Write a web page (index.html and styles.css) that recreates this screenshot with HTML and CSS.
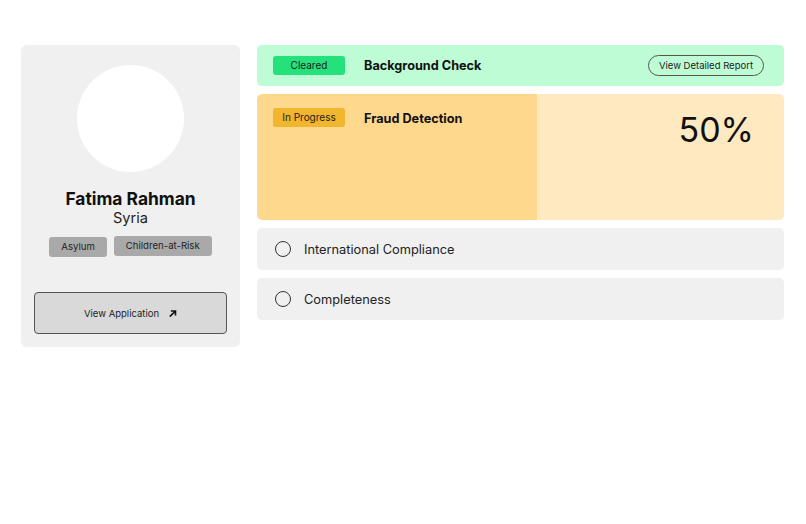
FILE: index.html
```html
<!DOCTYPE html>
<html>
<head>
<meta charset="utf-8">
<link rel="stylesheet" href="styles.css">
</head>
<body>
<div class="page">
  <aside class="profile">
    <div class="avatar"></div>
    <div class="name">Fatima Rahman</div>
    <div class="country">Syria</div>
    <div class="tags">
      <span class="tag">Asylum</span>
      <span class="tag">Children-at-Risk</span>
    </div>
    <button class="view-app">View Application
      <svg class="arrow" width="9" height="9" viewBox="0 0 10 10"><path d="M2 8.5 L8 2.5 M3.2 2.2 H8.3 V7.3" fill="none" stroke="#111" stroke-width="1.8"/></svg>
    </button>
  </aside>
  <main class="checks">
    <section class="row cleared">
      <span class="badge badge-green">Cleared</span>
      <span class="title">Background Check</span>
      <button class="report">View Detailed Report</button>
    </section>
    <section class="fraud">
      <div class="fraud-main">
        <span class="badge badge-amber">In Progress</span>
        <span class="title">Fraud Detection</span>
      </div>
      <div class="fraud-side">
        <span class="pct">50%</span>
      </div>
    </section>
    <section class="row pending">
      <span class="radio"></span>
      <span class="label">International Compliance</span>
    </section>
    <section class="row pending">
      <span class="radio"></span>
      <span class="label">Completeness</span>
    </section>
  </main>
</div>
</body>
</html>
```
FILE: styles.css
```css
* { box-sizing: border-box; }
body {
  margin: 0;
  font-family: Inter, "Noto Sans", sans-serif;
  color: #111;
  background: #fff;
}
.page {
  display: flex;
  align-items: flex-start;
  gap: 17px;
  padding: 45px 0 0 21px;
}
.profile {
  width: 219px;
  height: 302px;
  background: #f0f0f0;
  border-radius: 6px;
  padding: 20px 13px 0;
  display: flex;
  flex-direction: column;
  align-items: center;
}
.avatar {
  width: 107px;
  height: 107px;
  border-radius: 50%;
  background: #fff;
}
.name {
  margin-top: 16px;
  font-size: 17.4px;
  font-weight: 700;
  line-height: 22px;
}
.country {
  font-size: 14.6px;
  line-height: 17px;
  color: #222;
}
.tags {
  display: flex;
  gap: 7px;
  margin-top: 9px;
}
.tag {
  background: #a9a9a9;
  border-radius: 3px;
  font-size: 9.6px;
  line-height: 20px;
  height: 20px;
  padding: 0 12px;
  color: #222;
}
.tag:first-child { margin-top: 1px; }
.view-app {
  margin-top: 35px;
  width: 193px;
  height: 42px;
  background: #d9d9d9;
  border: 1px solid #555;
  border-radius: 4px;
  font-family: inherit;
  font-size: 9.5px;
  color: #222;
  display: flex;
  align-items: center;
  justify-content: center;
  gap: 9px;
  padding: 0;
}
.arrow { display: block; }
.checks {
  width: 527px;
  display: flex;
  flex-direction: column;
  gap: 8px;
}
.row {
  height: 41px;
  border-radius: 5px;
  display: flex;
  align-items: center;
  padding: 0 20px 0 16px;
}
.cleared { background: #bdfcd5; }
.badge {
  width: 72px;
  height: 19px;
  border-radius: 3px;
  font-size: 10px;
  line-height: 19px;
  text-align: center;
  color: #222;
  flex-shrink: 0;
}
.badge-green { background: #24e17c; }
.badge-amber { background: #f1b52e; }
.title {
  margin-left: 19px;
  font-size: 12.7px;
  font-weight: 700;
}
.report {
  margin-left: auto;
  height: 21px;
  padding: 0 10px;
  border: 1px solid #555;
  border-radius: 11px;
  background: transparent;
  font-family: inherit;
  font-size: 9.5px;
  color: #222;
}
.fraud {
  height: 126px;
  border-radius: 5px;
  overflow: hidden;
  display: flex;
}
.fraud-main {
  width: 280px;
  background: #fed98d;
  padding: 14px 16px;
  display: flex;
  align-items: flex-start;
}
.fraud-main .title { line-height: 21px; }
.fraud-side {
  flex: 1;
  background: #ffe9c1;
  display: flex;
  justify-content: flex-end;
  padding: 15px 30px 0 0;
}
.pct {
  font-size: 34px;
  line-height: 42px;
  font-weight: 400;
}
.pending { background: #f0f0f0; padding-left: 18px; height: 42px; }
.radio {
  width: 16px;
  height: 16px;
  border: 1px solid #333;
  border-radius: 50%;
  flex-shrink: 0;
}
.label {
  margin-left: 13px;
  font-size: 12.8px;
  color: #222;
}
```
